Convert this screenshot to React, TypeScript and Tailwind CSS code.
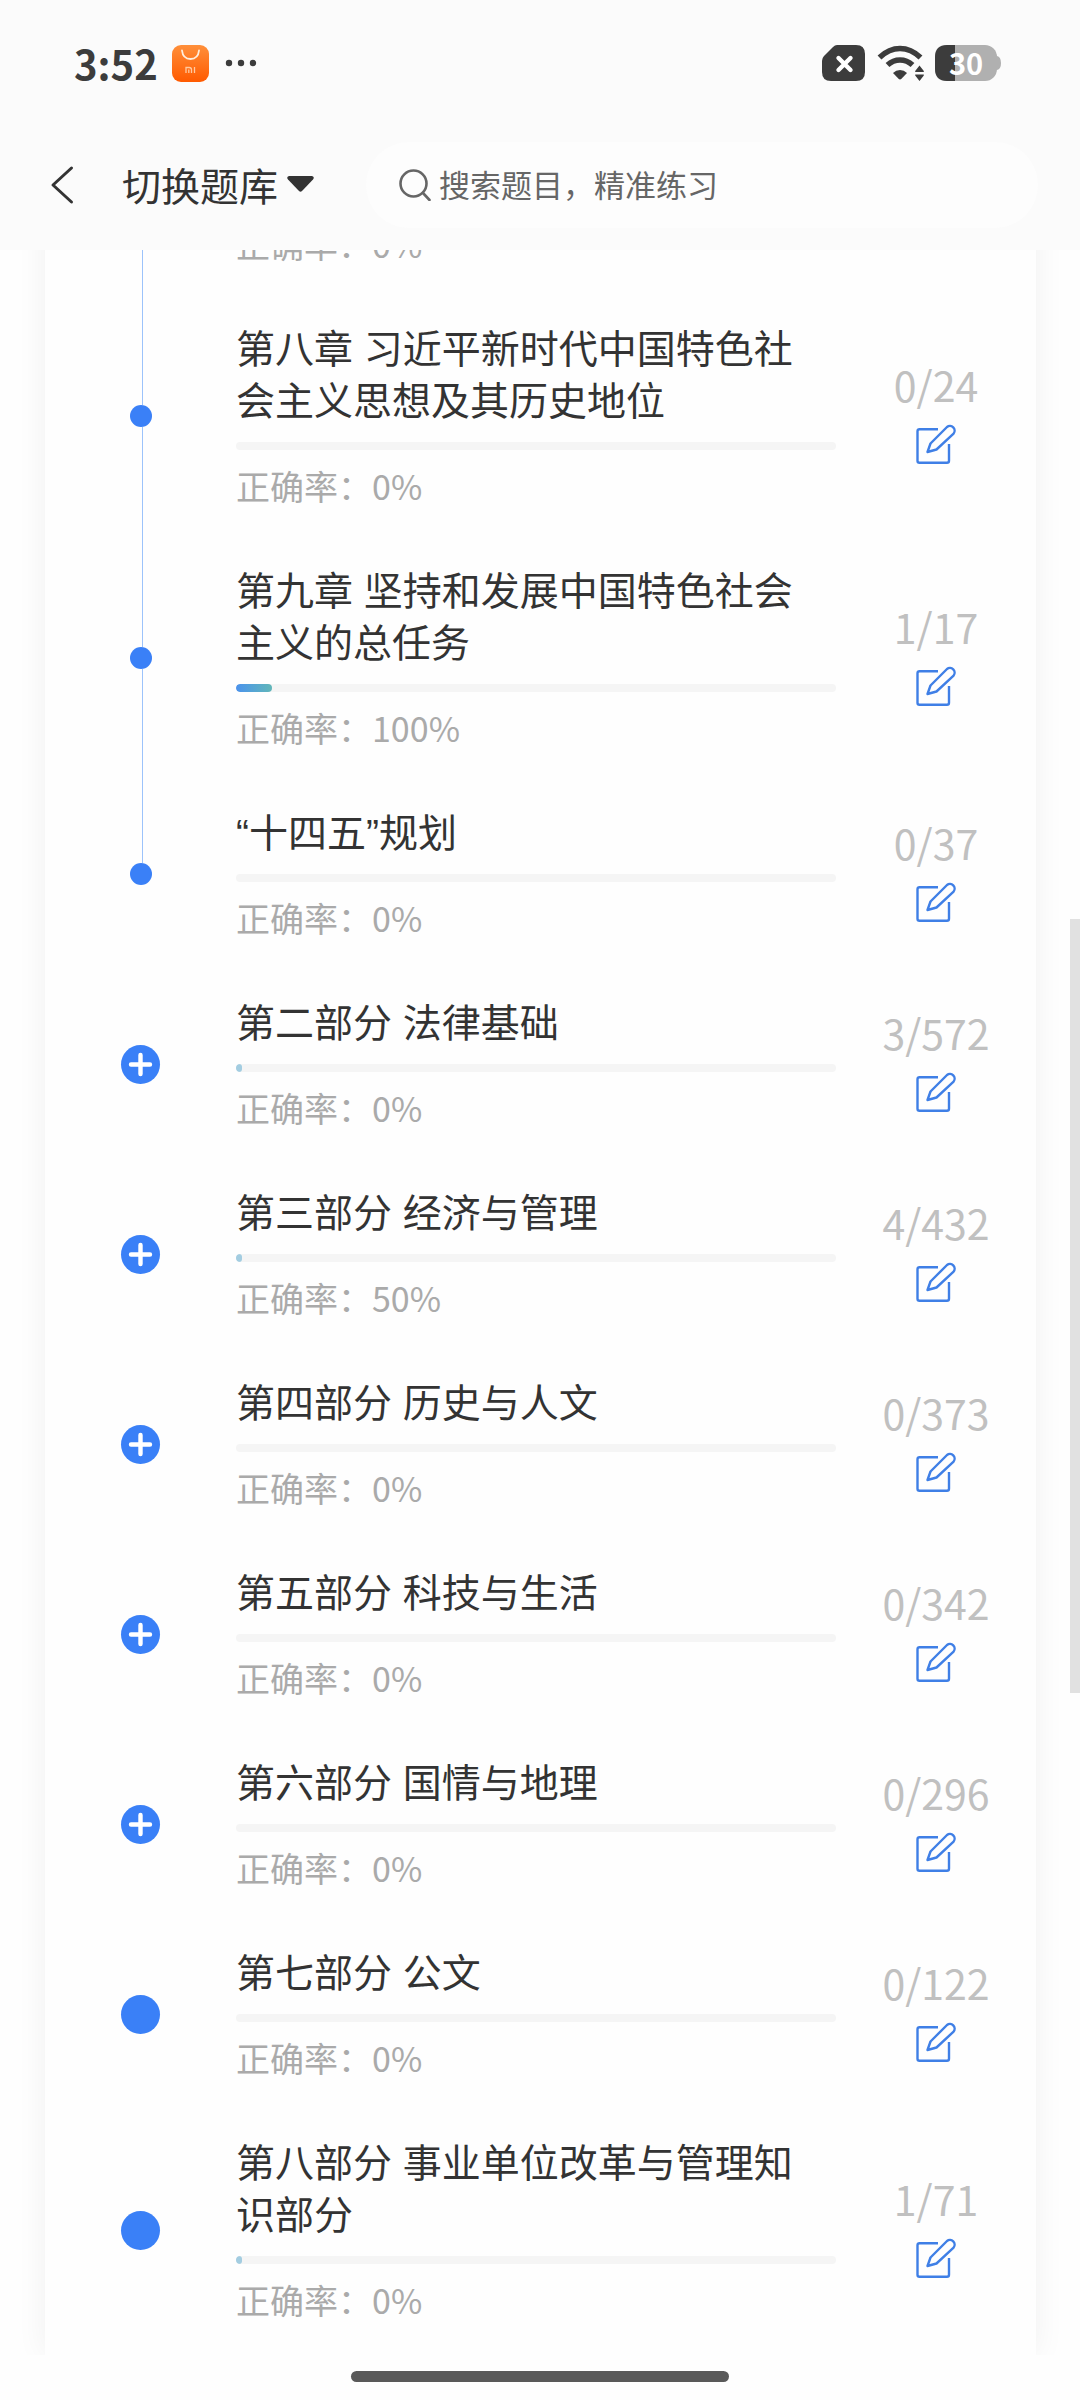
import { Fragment } from 'react'

type Marker = 'dot' | 'plus' | 'disc'

interface Chapter {
  title: string
  done: number
  total: number
  rate: number
  marker: Marker
  last?: boolean
}

const CHAPTERS: Chapter[] = [
  { title: '第八章 习近平新时代中国特色社会主义思想及其历史地位', done: 0, total: 24, rate: 0, marker: 'dot' },
  { title: '第九章 坚持和发展中国特色社会主义的总任务', done: 1, total: 17, rate: 100, marker: 'dot' },
  { title: '“十四五”规划', done: 0, total: 37, rate: 0, marker: 'dot', last: true },
  { title: '第二部分 法律基础', done: 3, total: 572, rate: 0, marker: 'plus' },
  { title: '第三部分 经济与管理', done: 4, total: 432, rate: 50, marker: 'plus' },
  { title: '第四部分 历史与人文', done: 0, total: 373, rate: 0, marker: 'plus' },
  { title: '第五部分 科技与生活', done: 0, total: 342, rate: 0, marker: 'plus' },
  { title: '第六部分 国情与地理', done: 0, total: 296, rate: 0, marker: 'plus' },
  { title: '第七部分 公文', done: 0, total: 122, rate: 0, marker: 'disc' },
  { title: '第八部分 事业单位改革与管理知识部分', done: 1, total: 71, rate: 0, marker: 'disc' },
]

/* ── Status bar ─── */
function StatusBar() {
  return (
    <div className="flex h-[38px] items-center pl-[74px] pr-[79px] text-[#3c3c3c]">
      <span className="text-[40px] font-bold leading-9">3:52</span>
      <svg className="ml-3.5 h-[37px] w-[37px]" viewBox="0 0 37 37" fill="none">
        <defs>
          <linearGradient id="store" x1="0" y1="0" x2="0" y2="1">
            <stop offset="0" stopColor="#ff8f3a" />
            <stop offset="1" stopColor="#ff5a00" />
          </linearGradient>
        </defs>
        <rect width="37" height="37" rx="9" fill="url(#store)" />
        <path d="M10 5.500c.6 5.500 4 8.500 8.500 8.500s7.900-3 8.500-8.500" stroke="#ffeedd" strokeWidth="1.800" strokeLinecap="round" />
        <path d="M14 28v-5.500h3.200q2.300 0 2.300 2.200V28M16.800 24.500V28M22.500 22v6" stroke="#ffc9a0" strokeWidth="1.300" />
      </svg>
      <svg className="ml-4 h-2 w-8" viewBox="0 0 32 8" fill="currentColor">
        <circle cx="4" cy="4" r="3.200" />
        <circle cx="16" cy="4" r="3.200" />
        <circle cx="28" cy="4" r="3.200" />
      </svg>

      <svg className="ml-auto h-9 w-[43px]" viewBox="0 0 43 36" fill="none">
        <path d="M15 0h19q9 0 9 9v18q0 9-9 9H9q-9 0-9-9V16q0-3 2-5L11 2q2-2 4-2Z" fill="currentColor" />
        <path d="m16.500 13 12 12m0-12-12 12" stroke="#fff" strokeWidth="4.400" strokeLinecap="round" />
      </svg>
      <svg className="ml-3 h-9 w-[47px]" viewBox="0 0 47 36" fill="none">
        <path d="M2.500 12.500Q12 3.500 23 3.500t20.500 9" stroke="currentColor" strokeWidth="5.600" />
        <path d="M10.500 20q5.500-5 12.500-5t12.500 5" stroke="currentColor" strokeWidth="5.600" />
        <path d="M16 28q3-3 7-3t7 3l-5.500 5.800q-1.500 1.400-3 0Z" fill="currentColor" />
        <path d="m42.500 20.500 4.300 5.500v1h-8.600v-1ZM38.200 29.500h8.600v1l-4.300 5.500-4.300-5.500Z" fill="currentColor" />
      </svg>
      <div className="relative ml-[11px] h-9 w-[66px]">
        <svg className="h-9 w-[66px]" viewBox="0 0 66 36">
          <path d="M60 11h2q4 1 4 7t-4 7h-2Z" fill="#b0b0b0" />
          <rect width="62" height="36" rx="12" fill="#b0b0b0" />
          <path d="M20 0h-8Q0 0 0 12v12q0 12 12 12h8Z" fill="currentColor" />
        </svg>
        <span className="absolute inset-y-0 left-0 w-[62px] text-center text-[29px] font-bold leading-[34px] text-white">
          30
        </span>
      </div>
    </div>
  )
}

function EditIcon() {
  return (
    <svg className="h-10 w-10" viewBox="0 0 40 40" fill="none" stroke="#3f7fe6" strokeWidth="2.400">
      <path d="M22 5.200H3.500q-2 0-2 2v29.500q0 2 2 2H31q2 0 2-2V20" />
      <path d="M14.500 19.500 31 3a4.700 4.700 0 0 1 6.600 6.600L20.500 25.500l-9 2.500Z" strokeLinejoin="round" />
    </svg>
  )
}

function Rate({ value }: { value: number }) {
  return <p className="text-[34px] leading-[46px] text-[#aaaaaa]">正确率：{value}%</p>
}

/* ── Timeline column: line above, marker, line below ─── */
function Timeline({ chapter }: { chapter: Chapter }) {
  const { marker, last, title } = chapter
  return (
    <div className="flex w-[191px] shrink-0 flex-col items-center justify-center">
      {marker === 'dot' && (
        <Fragment>
          <span className="ml-[3px] w-px flex-1 bg-[#9cc3fb]" />
          <span className="h-[22px] w-[22px] rounded-full bg-[#3a80f7]" />
          <span className={last ? 'flex-1' : 'ml-[3px] w-px flex-1 bg-[#9cc3fb]'} />
        </Fragment>
      )}
      {marker === 'plus' && (
        <button type="button" aria-label={`展开 ${title}`} className="rounded-full bg-[#3a80f7]">
          <svg className="h-[39px] w-[39px]" viewBox="0 0 39 39" stroke="#fff" strokeWidth="4.400" strokeLinecap="round">
            <path d="M19.500 10v19M10 19.500h19" />
          </svg>
        </button>
      )}
      {marker === 'disc' && <span className="h-[39px] w-[39px] rounded-full bg-[#3a80f7]" />}
    </div>
  )
}

function ChapterRow({ chapter }: { chapter: Chapter }) {
  const { title, done, total, rate } = chapter
  const percent = Math.round((done / total) * 100)
  return (
    <li className="flex">
      <Timeline chapter={chapter} />
      <div className="min-w-0 flex-1 pb-7 pt-[29px]">
        <h2 className="pr-9 font-['Liberation_Sans','Noto_Sans_CJK_SC',sans-serif] text-[39px] leading-[52px] text-[#333333]">
          {title}
        </h2>
        <div className="mb-[13px] mt-3.5 h-2 overflow-hidden rounded-full bg-[#f5f5f5]">
          <div
            className={
              percent > 1
                ? 'h-full rounded-full bg-gradient-to-r from-[#4c92ec] to-[#62b6b8]'
                : 'h-full rounded-full bg-[#a3cde1]'
            }
            style={{ width: `${percent}%` }}
          />
        </div>
        <Rate value={rate} />
      </div>
      <div className="flex w-[200px] shrink-0 flex-col items-center justify-center pb-1.5">
        <span className="text-[41px] leading-[44px] text-[#c0c0c0]">
          {done}/{total}
        </span>
        <button type="button" aria-label={`练习 ${title}`} className="mt-[18px]">
          <EditIcon />
        </button>
      </div>
    </li>
  )
}

export default function App() {
  return (
    <div
      lang="zh-CN"
      className="relative min-h-screen overflow-hidden bg-[#fefefe] font-['Noto_Sans_CJK_SC',sans-serif]"
    >
      <header className="relative z-10 bg-[#fbfbfb] pb-[22px] pt-11">
        <StatusBar />
        <nav className="mt-[60px] flex h-[86px] items-center pl-[50px] pr-[42px]">
          <button type="button" aria-label="返回">
            <svg className="h-10 w-6" viewBox="0 0 24 40" fill="none" stroke="#333" strokeWidth="3" strokeLinecap="round" strokeLinejoin="round">
              <path d="M21.500 3 3 20l18.500 17" />
            </svg>
          </button>
          <button type="button" className="ml-12 flex items-center pb-0.5 text-[39px] leading-[52px] text-[#333333]">
            切换题库
            <svg className="ml-[9px] h-4 w-[27px]" viewBox="0 0 27 16" fill="#333">
              <path d="M2 0h23q3 .8 1 3.500L15 15q-1.500 1.300-3 0L1 3.500Q-1 .8 2 0Z" />
            </svg>
          </button>
          <label className="ml-[52px] flex h-full min-w-0 flex-1 items-center rounded-full bg-[#fdfdfd] pl-[33px]">
            <svg className="h-8 w-8 shrink-0" viewBox="0 0 32 32" fill="none" stroke="#666" strokeWidth="2.600" strokeLinecap="round">
              <circle cx="14.500" cy="14.500" r="13" />
              <path d="m24 24 6.500 7" />
            </svg>
            <input
              type="text"
              aria-label="搜索题目"
              placeholder="搜索题目，精准练习"
              className="ml-2 min-w-0 flex-1 bg-transparent pb-0.5 text-[31px] leading-10 text-[#333333] outline-none placeholder:text-[#666666]"
            />
          </label>
        </nav>
      </header>

      {/* List is scrolled: the top of the card slides under the header */}
      <main className="-mt-[29px] overflow-hidden">
        <ul className="ml-[45px] mr-11 bg-[#fefefe] pb-1 shadow-[0_0_30px_rgba(0,0,0,0.06)]">
          <li className="flex">
            <div className="flex w-[191px] shrink-0 justify-center">
              <span className="ml-[3px] w-px bg-[#9cc3fb]" />
            </div>
            <div className="pb-7">
              <Rate value={0} />
            </div>
          </li>
          {CHAPTERS.map((chapter) => (
            <ChapterRow key={chapter.title} chapter={chapter} />
          ))}
        </ul>
      </main>

      {/* Home indicator */}
      <div className="flex justify-center pb-[18px] pt-4">
        <span className="h-[11px] w-[378px] rounded-full bg-[#595959]" />
      </div>

      {/* Scroll thumb */}
      <div className="absolute right-0 top-[919px] h-[774px] w-2.5 bg-[#e1e1e1]" />
    </div>
  )
}
